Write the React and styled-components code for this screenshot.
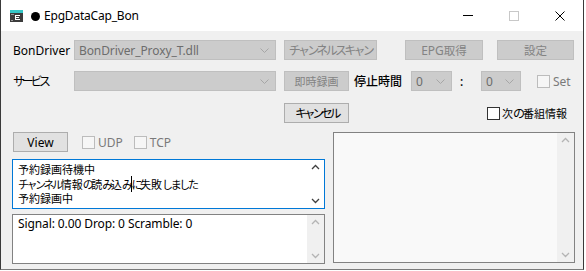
import React from "react";
import styled, { createGlobalStyle } from "styled-components";

const Global = createGlobalStyle`
  html, body { margin: 0; padding: 0; background: #ffffff; }
  body {
    font-family: "Noto Sans", "Noto Sans CJK JP", sans-serif;
    font-size: 12px;
    color: #000;
  }
  * { box-sizing: border-box; }
`;

const Window = styled.div`
  width: 584px;
  height: 270px;
  border-left: 1px solid #3a3a3a;
  border-right: 1px solid #3a3a3a;
  border-bottom: 1px solid #7a7a7a;
  display: flex;
  flex-direction: column;
  background: #f0f0f0;
`;

const TitleBar = styled.div`
  height: 31px;
  background: #ffffff;
  display: flex;
  align-items: center;
  padding-left: 9px;
`;

const TitleText = styled.span`
  font-size: 12px;
  margin-left: 8px;
  color: #000;
  letter-spacing: -0.2px;
`;

const Dot = styled.span`
  display: inline-block;
  width: 9px;
  height: 9px;
  border-radius: 50%;
  background: #000;
  margin-right: 4px;
  vertical-align: -0.5px;
`;

const Controls = styled.div`
  margin-left: auto;
  display: flex;
  align-items: center;
`;

const Ctrl = styled.div`
  width: 46px;
  height: 30px;
  display: flex;
  align-items: center;
  justify-content: center;
`;

const Client = styled.div`
  flex: 1;
  padding: 9px 0 0 11px;
  display: flex;
  flex-direction: column;
`;

const Row = styled.div`
  display: flex;
  align-items: center;
  height: 20px;
  margin-top: ${(p) => p.$mt || 0}px;
`;

const Label = styled.div`
  width: ${(p) => p.$w}px;
  font-size: 12px;
  color: #000;
  margin-left: ${(p) => p.$ml || 0}px;
  white-space: nowrap;
  font-weight: ${(p) => (p.$bold ? 500 : 400)};
`;

const Kana = styled.span`
  letter-spacing: ${(p) => p.$ls ?? -2.4}px;
`;

const Kanji = styled.span`
  font-size: ${(p) => p.$fs || 11.5}px;
`;

const Combo = styled.div`
  width: ${(p) => p.$w}px;
  height: 20px;
  margin-left: ${(p) => p.$ml || 0}px;
  background: #cccccc;
  border: 1px solid #bfbfbf;
  display: flex;
  align-items: center;
  padding-left: 4px;
  color: #6d6d6d;
  font-size: 12px;
  letter-spacing: -0.1px;
  position: relative;
`;

const ComboArrow = styled.svg`
  position: absolute;
  right: 6px;
  top: 7px;
`;

const Button = styled.div`
  width: ${(p) => p.$w}px;
  height: 20px;
  margin-left: ${(p) => p.$ml || 0}px;
  background: ${(p) => (p.$disabled ? "#cccccc" : "#e1e1e1")};
  border: 1px solid ${(p) => (p.$disabled ? "#bfbfbf" : "#adadad")};
  color: ${(p) => (p.$disabled ? "#838383" : "#000")};
  display: flex;
  align-items: center;
  justify-content: center;
  font-size: 12px;
  white-space: nowrap;
`;

const Check = styled.label`
  display: flex;
  align-items: center;
  margin-left: ${(p) => p.$ml || 0}px;
  color: ${(p) => (p.$disabled ? "#7a7a7a" : "#000")};
  font-size: 12px;
  white-space: nowrap;
`;

const Box = styled.span`
  width: 13px;
  height: 13px;
  border: 1px solid ${(p) => (p.$disabled ? "#bcbcbc" : "#333333")};
  background: ${(p) => (p.$disabled ? "#f6f6f6" : "#ffffff")};
  margin-right: ${(p) => p.$gap || 3}px;
  display: inline-block;
`;

const Bottom = styled.div`
  display: flex;
  margin-top: 9px;
`;

const LeftCol = styled.div`
  width: 313px;
  display: flex;
  flex-direction: column;
`;

const ViewRow = styled.div`
  display: flex;
  align-items: center;
  height: 20px;
  padding-left: 1px;
`;

const TextBox = styled.div`
  width: 313px;
  height: ${(p) => p.$h}px;
  margin-top: ${(p) => p.$mt || 0}px;
  border: 1px solid ${(p) => (p.$focus ? "#0078d7" : "#828282")};
  background: #ffffff;
  display: flex;
`;

const TextContent = styled.div`
  flex: 1;
  padding: 2px 0 0 5px;
  font-family: "Noto Sans CJK JP", "Noto Sans", sans-serif;
  font-size: 11px;
  line-height: 14.5px;
  color: #000;
`;

const Line = styled.div`
  white-space: nowrap;
`;

const StatusText = styled.div`
  flex: 1;
  padding: 1px 0 0 5px;
  font-size: 12px;
  line-height: 16px;
  color: #000;
  letter-spacing: -0.1px;
`;

const Caret = styled.span`
  border-left: 1px solid #000;
  letter-spacing: -2.4px;
`;

const ScrollBar = styled.div`
  width: 17px;
  background: ${(p) => (p.$track ? "#f0f0f0" : "#ffffff")};
  display: flex;
  flex-direction: column;
  justify-content: space-between;
  align-items: center;
  padding: 4px 0 4px;
`;

const RightList = styled.div`
  width: 242px;
  height: 131px;
  margin-left: 8px;
  border: 1px solid #828282;
  background: #f9f9f9;
  display: flex;
  justify-content: flex-end;
`;

const Chevron = ({ up, color }) => (
  <svg width="9" height="6" viewBox="0 0 9 6">
    <polyline
      points={up ? "1,5 4.5,1.5 8,5" : "1,1 4.5,4.5 8,1"}
      fill="none"
      stroke={color}
      strokeWidth="1.3"
    />
  </svg>
);

const ComboDown = () => (
  <ComboArrow width="9" height="5" viewBox="0 0 9 5">
    <polyline points="0.5,0.5 4.5,4.5 8.5,0.5" fill="none" stroke="#a6a6a6" strokeWidth="1" />
  </ComboArrow>
);

const AppIcon = () => (
  <svg width="13" height="12" viewBox="0 0 13 12">
    <rect x="0" y="0" width="13" height="12" fill="#3c3c3c" />
    <rect x="0" y="0" width="13" height="3" fill="#35c6c6" />
    <rect x="1" y="4" width="3" height="1" fill="#9a9a9a" />
    <rect x="5" y="5" width="5" height="1" fill="#ffffff" />
    <rect x="5" y="5" width="1" height="5" fill="#ffffff" />
    <rect x="5" y="7" width="4" height="1" fill="#ffffff" />
    <rect x="5" y="9" width="5" height="1" fill="#ffffff" />
    <rect x="1" y="10" width="2" height="1" fill="#9a9a9a" />
  </svg>
);

export default function App() {
  return (
    <>
      <Global />
      <Window>
        <TitleBar>
          <AppIcon />
          <TitleText>
            <Dot />
            EpgDataCap_Bon
          </TitleText>
          <Controls>
            <Ctrl>
              <svg width="10" height="1" viewBox="0 0 10 1">
                <rect width="10" height="1" fill="#000" />
              </svg>
            </Ctrl>
            <Ctrl>
              <svg width="10" height="10" viewBox="0 0 10 10">
                <rect x="0.5" y="0.5" width="9" height="9" fill="none" stroke="#c8c8c8" />
              </svg>
            </Ctrl>
            <Ctrl>
              <svg width="10" height="10" viewBox="0 0 10 10">
                <path d="M0.5 0.5 L9.5 9.5 M9.5 0.5 L0.5 9.5" stroke="#000" strokeWidth="1" />
              </svg>
            </Ctrl>
          </Controls>
        </TitleBar>
        <Client>
          <Row>
            <Label $w={61} $ml={1}>BonDriver</Label>
            <Combo $w={202}>
              BonDriver_Proxy_T.dll
              <ComboDown />
            </Combo>
            <Button $disabled $w={93} $ml={8}>
              <Kana $ls={-2.7}>チャンネルスキャン</Kana>
            </Button>
            <Button $disabled $w={78} $ml={28}>
              EPG<Kanji>取得</Kanji>
            </Button>
            <Button $disabled $w={77} $ml={14}>
              <Kanji>設定</Kanji>
            </Button>
          </Row>
          <Row $mt={11}>
            <Label $w={61} $ml={1}>
              <Kana $ls={-3.3}>サービス</Kana>
            </Label>
            <Combo $w={202}>
              <ComboDown />
            </Combo>
            <Button $disabled $w={65} $ml={8}>
              <Kanji $fs={11}>即時録画</Kanji>
            </Button>
            <Label $w={57} $ml={5} $bold>停止時間</Label>
            <Combo $w={41}>
              0
              <ComboDown />
            </Combo>
            <Label $w={21} $ml={8} $bold>:</Label>
            <Combo $w={40}>
              0
              <ComboDown />
            </Combo>
            <Check $disabled $ml={16}>
              <Box $disabled />
              Set
            </Check>
          </Row>
          <Row $mt={12}>
            <Label $w={272} />
            <Button $w={65}>
              <Kana $ls={-3.4}>キャンセル</Kana>
            </Button>
            <Check $ml={138}>
              <Box $gap={2} />
              <Kanji $fs={11}>次</Kanji>
              <Kana $ls={-2}>の</Kana>
              <Kanji $fs={11}>番組情報</Kanji>
            </Check>
          </Row>
          <Bottom>
            <LeftCol>
              <ViewRow>
                <Button $w={55}>View</Button>
                <Check $disabled $ml={14}>
                  <Box $disabled />
                  UDP
                </Check>
                <Check $disabled $ml={11}>
                  <Box $disabled />
                  TCP
                </Check>
              </ViewRow>
              <TextBox $focus $h={50} $mt={7}>
                <TextContent>
                  <Line>予約録画待機中</Line>
                  <Line>
                    <Kana>チャンネル</Kana>情報<Kana>の</Kana>読<Kana>み</Kana>込<Kana>み</Kana>
                    <Caret>に</Caret>失敗<Kana>しました</Kana>
                  </Line>
                  <Line>予約録画中</Line>
                </TextContent>
                <ScrollBar>
                  <Chevron up color="#404040" />
                  <Chevron color="#404040" />
                </ScrollBar>
              </TextBox>
              <TextBox $h={50} $mt={5}>
                <StatusText>Signal: 0.00 Drop: 0 Scramble: 0</StatusText>
                <ScrollBar $track>
                  <Chevron up color="#b4b4b4" />
                  <Chevron color="#b4b4b4" />
                </ScrollBar>
              </TextBox>
            </LeftCol>
            <RightList>
              <ScrollBar $track>
                <Chevron up color="#b4b4b4" />
                <Chevron color="#b4b4b4" />
              </ScrollBar>
            </RightList>
          </Bottom>
        </Client>
      </Window>
    </>
  );
}
